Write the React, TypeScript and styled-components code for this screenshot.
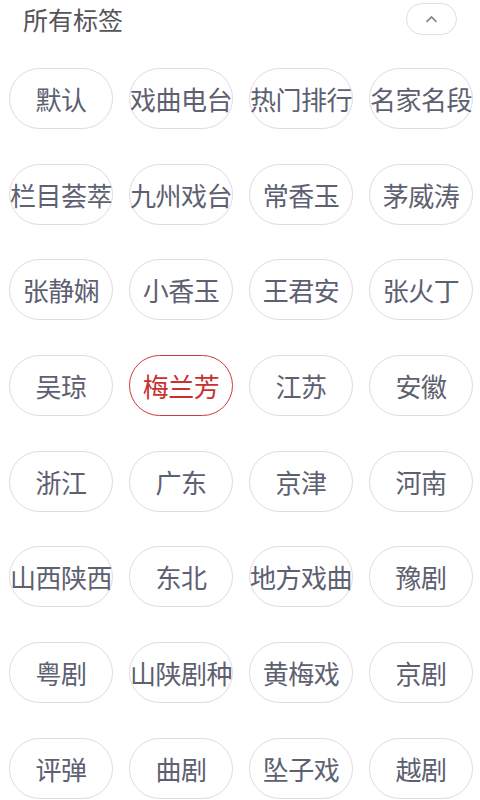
import styled, { createGlobalStyle } from "styled-components";

const GlobalStyle = createGlobalStyle`
    body {
        margin:0;
        background:#ffffff;
        font-family:"Noto Sans CJK SC","Noto Sans",sans-serif;
    }
`;

const Wrapper = styled.div`
    width:480px;
    height:800px;
    overflow:hidden;
    background:#ffffff;
`;

const Header = styled.div`
    display:flex;
    align-items:center;
    justify-content:space-between;
    height:38px;
    padding:0 23px 0 23px;
`;

const Title = styled.h2`
    margin:0;
    font-size:25px;
    font-weight:400;
    color:#555559;
    line-height:1;
`;

const ToggleButton = styled.button`
    display:flex;
    align-items:center;
    justify-content:center;
    width:51px;
    height:32px;
    padding:0;
    border:1.5px solid #dfdfe3;
    border-radius:16px;
    background:#ffffff;
    margin-top:0px;
`;

const TagGrid = styled.div`
    display:grid;
    grid-template-columns:repeat(4,104px);
    column-gap:16px;
    row-gap:34.7px;
    padding:30px 0 0 9px;
`;

const Tag = styled.div<{ active?: boolean }>`
    display:flex;
    align-items:center;
    justify-content:center;
    height:61px;
    box-sizing:border-box;
    border:1.5px solid ${(props) => (props.active ? "#d23a3a" : "#dcdce2")};
    border-radius:30.5px;
    color:${(props) => (props.active ? "#c93030" : "#5d6070")};
    font-size:26px;
    white-space:nowrap;
    letter-spacing:-0.5px;
`;

const tags = [
    "默认", "戏曲电台", "热门排行", "名家名段",
    "栏目荟萃", "九州戏台", "常香玉", "茅威涛",
    "张静娴", "小香玉", "王君安", "张火丁",
    "吴琼", "梅兰芳", "江苏", "安徽",
    "浙江", "广东", "京津", "河南",
    "山西陕西", "东北", "地方戏曲", "豫剧",
    "粤剧", "山陕剧种", "黄梅戏", "京剧",
    "评弹", "曲剧", "坠子戏", "越剧",
];

function App() {
    return (
        <Wrapper>
            <GlobalStyle />
            <Header>
                <Title>所有标签</Title>
                <ToggleButton>
                    <svg width="13" height="8" viewBox="0 0 13 8">
                        <path d="M1.5 6.8 L6.5 2 L11.5 6.8" fill="none" stroke="#85858a" strokeWidth="1.7" />
                    </svg>
                </ToggleButton>
            </Header>
            <TagGrid>
                {tags.map((tag) => (
                    <Tag key={tag} active={tag === "梅兰芳"}>{tag}</Tag>
                ))}
            </TagGrid>
        </Wrapper>
    );
}

export default App;
